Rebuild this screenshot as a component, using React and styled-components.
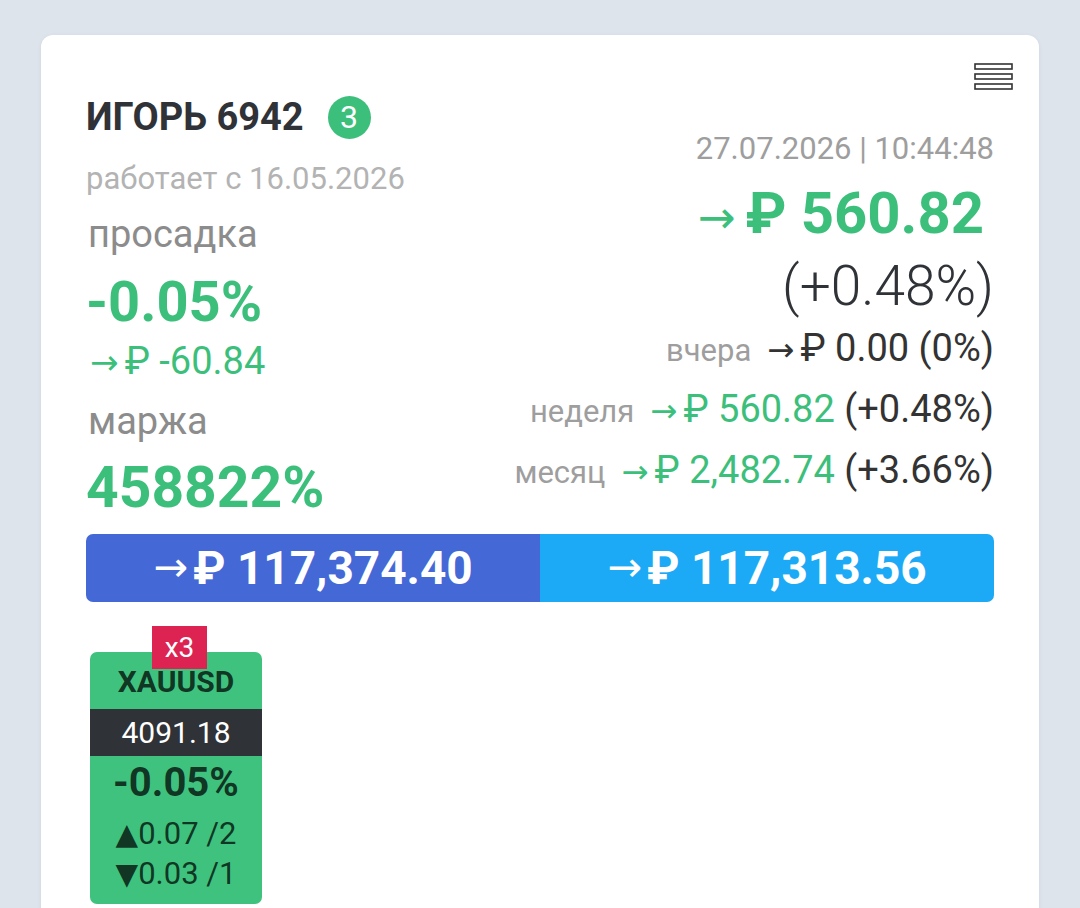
import React from 'react'
import styled, { createGlobalStyle } from 'styled-components'

const green = '#3dbf7c'

const GlobalStyle = createGlobalStyle`
  html, body {
    margin: 0;
    padding: 0;
    background: #dee4eb;
    font-family: Roboto, "Noto Sans", "DejaVu Sans", sans-serif;
  }
`

const Page = styled.div`
  padding: 35px 41px 0;
  height: 908px;
  box-sizing: border-box;
  overflow: hidden;
`

const Card = styled.section`
  position: relative;
  background: #fff;
  border-radius: 12px;
  box-shadow: 0 1px 4px rgba(40, 60, 90, 0.08);
  padding: 60px 45px 60px 45px;
`

const MenuButton = styled.button`
  position: absolute;
  top: 28px;
  right: 26px;
  padding: 0;
  border: 0;
  background: none;
  line-height: 0;
  cursor: pointer;
`

const Header = styled.header`
  display: grid;
  grid-template-columns: 1fr auto;
`

const LeftCol = styled.div`
  display: flex;
  flex-direction: column;
  align-items: flex-start;
`

const TitleRow = styled.div`
  display: flex;
  align-items: center;
  gap: 24px;
`

const Title = styled.h1`
  margin: 0;
  font-size: 38px;
  line-height: 1.2;
  font-weight: 700;
  color: #2f3237;
`

const CountBadge = styled.span`
  width: 43px;
  height: 43px;
  border-radius: 50%;
  background: ${green};
  color: #fff;
  font-size: 32px;
  line-height: 43px;
  text-align: center;
`

const Since = styled.div`
  margin-top: 19px;
  font-size: 31px;
  line-height: 1.2;
  color: #b3b3b3;
`

const Label = styled.div`
  margin-top: ${p => p.$mt}px;
  font-size: 38px;
  line-height: 1.2;
  color: #8c8c8c;
  padding-left: 2px;
`

const BigValue = styled.div`
  margin-top: ${p => p.$mt}px;
  font-size: ${p => p.$size || 56}px;
  line-height: 1.2;
  font-weight: 700;
  color: ${green};
`

const SubAmount = styled.div`
  margin-top: 2px;
  font-size: 38px;
  line-height: 1.2;
  color: ${green};
  padding-left: 4px;
`

const Arrow = styled.span`
  font-weight: 400;
  font-size: ${p => p.$scale || 1}em;
  line-height: 1;
  margin-right: ${p => p.$gap || 6}px;
`

const RightCol = styled.div`
  padding-top: 35px;
  display: flex;
  flex-direction: column;
  align-items: flex-end;
  text-align: right;
`

const DateTime = styled.div`
  font-size: 31px;
  line-height: 1.2;
  color: #9e9e9e;
`

const Profit = styled.div`
  margin-top: 12px;
  padding-right: 10px;
  font-size: 58px;
  line-height: 1.2;
  font-weight: 700;
  color: ${green};
`

const ProfitPct = styled.div`
  margin-top: 4px;
  font-size: 55px;
  line-height: 1.2;
  font-weight: 300;
  color: #2f3237;
`

const PeriodRow = styled.div`
  font-size: 38px;
  line-height: 58px;
  color: #333;
  white-space: nowrap;
`

const PeriodLabel = styled.span`
  font-size: 31px;
  color: #9e9e9e;
  margin-right: 16px;
`

const Amount = styled.span`
  color: ${p => (p.$green ? green : '#333')};
`

const BalanceBar = styled.div`
  margin-top: 12px;
  display: grid;
  grid-template-columns: 1fr 1fr;
  height: 68px;
  border-radius: 7px;
  overflow: hidden;
`

const BalanceCell = styled.div`
  display: flex;
  align-items: center;
  justify-content: center;
  background: ${p => p.$bg};
  color: #fff;
  font-size: 46px;
  font-weight: 700;
`

const Tickers = styled.div`
  margin-top: 50px;
  padding-left: 4px;
  display: flex;
  gap: 16px;
`

const Ticker = styled.div`
  position: relative;
  width: 172px;
  padding: 12px 0 10px;
  background: #3ec27e;
  border-radius: 7px;
  text-align: center;
  color: rgba(0, 0, 0, 0.74);
`

const Leverage = styled.span`
  position: absolute;
  top: -26px;
  left: 62px;
  width: 55px;
  height: 43px;
  background: #dc2352;
  color: #fff;
  font-size: 28px;
  line-height: 43px;
  text-align: center;
`

const Symbol = styled.div`
  font-size: 30px;
  line-height: 36px;
  font-weight: 700;
`

const Price = styled.div`
  margin-top: 9px;
  height: 47px;
  background: #2f3237;
  color: #fff;
  font-size: 30px;
  line-height: 47px;
`

const Change = styled.div`
  margin-top: 3px;
  font-size: 40px;
  line-height: 48px;
  font-weight: 700;
`

const Deals = styled.div`
  margin-top: ${p => p.$mt || 0}px;
  font-size: 31px;
  line-height: 40px;

  i {
    font-style: normal;
    font-size: 0.95em;
    font-family: "DejaVu Sans", sans-serif;
  }
`

const MenuIcon = () => (
  <svg width="39" height="28" viewBox="0 0 39 28" fill="none" stroke="#333" strokeWidth="1.6">
    <rect x="1" y="1" width="37" height="5" />
    <rect x="1" y="11" width="37" height="5" />
    <rect x="1" y="21" width="37" height="5" />
  </svg>
)

const Rub = ({ children, gap, scale }) => (
  <>
    <Arrow $gap={gap} $scale={scale}>→</Arrow>₽ {children}
  </>
)

const periods = [
  { label: 'вчера', amount: '0.00', pct: '(0%)', green: false },
  { label: 'неделя', amount: '560.82', pct: '(+0.48%)', green: true },
  { label: 'месяц', amount: '2,482.74', pct: '(+3.66%)', green: true },
]

const App = () => (
  <Page>
    <GlobalStyle />
    <Card>
      <MenuButton aria-label="menu"><MenuIcon /></MenuButton>
      <Header>
        <LeftCol>
          <TitleRow>
            <Title>ИГОРЬ 6942</Title>
            <CountBadge>3</CountBadge>
          </TitleRow>
          <Since>работает с 16.05.2026</Since>
          <Label $mt={15}>просадка</Label>
          <BigValue $mt={12}>-0.05%</BigValue>
          <SubAmount><Rub scale={0.9}>-60.84</Rub></SubAmount>
          <Label $mt={15}>маржа</Label>
          <BigValue $mt={9} $size={57}>458822%</BigValue>
        </LeftCol>
        <RightCol>
          <DateTime>27.07.2026 | 10:44:48</DateTime>
          <Profit><Rub gap={10} scale={0.78}>560.82</Rub></Profit>
          <ProfitPct>(+0.48%)</ProfitPct>
          {periods.map(p => (
            <PeriodRow key={p.label}>
              <PeriodLabel>{p.label}</PeriodLabel>
              <Amount $green={p.green}><Rub gap={6} scale={0.85}>{p.amount}</Rub></Amount>{' '}{p.pct}
            </PeriodRow>
          ))}
        </RightCol>
      </Header>
      <BalanceBar>
        <BalanceCell $bg="#4468d6"><Rub gap={5} scale={0.9}>117,374.40</Rub></BalanceCell>
        <BalanceCell $bg="#1ca9f6"><Rub gap={5} scale={0.9}>117,313.56</Rub></BalanceCell>
      </BalanceBar>
      <Tickers>
        <Ticker>
          <Leverage>x3</Leverage>
          <Symbol>XAUUSD</Symbol>
          <Price>4091.18</Price>
          <Change>-0.05%</Change>
          <Deals $mt={7}><i>▲</i>0.07 /2</Deals>
          <Deals><i>▼</i>0.03 /1</Deals>
        </Ticker>
      </Tickers>
    </Card>
  </Page>
)

export default App
